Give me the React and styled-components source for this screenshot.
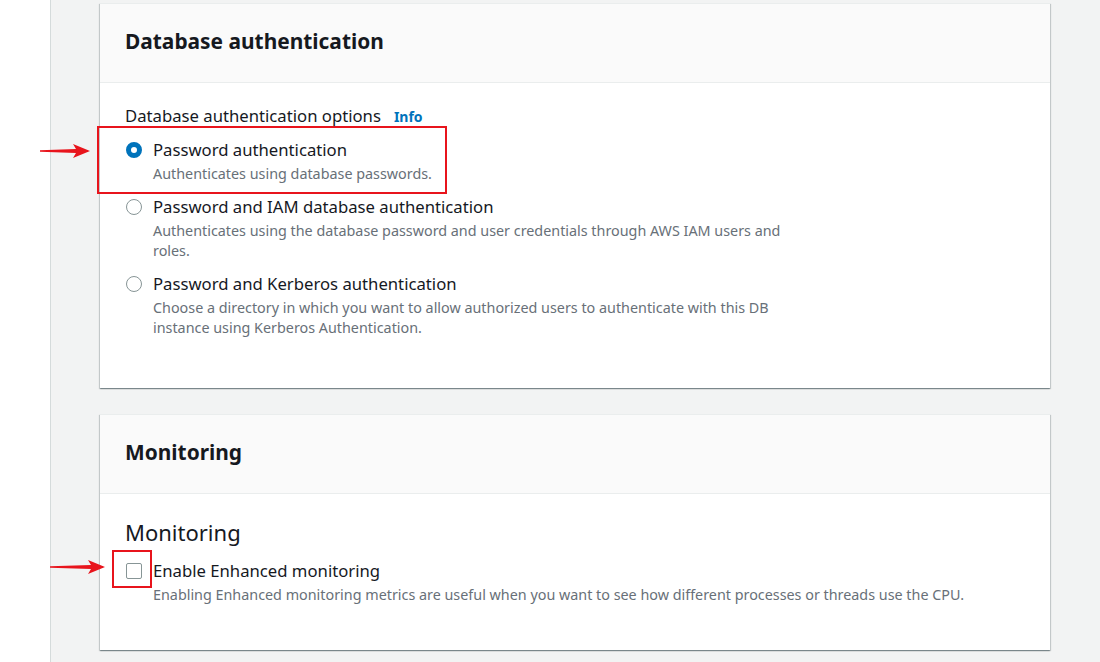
import React from "react";
import styled, { createGlobalStyle } from "styled-components";

const Global = createGlobalStyle`
  html, body { margin: 0; padding: 0; }
  body { background: #fff; font-family: "Noto Sans", "Open Sans", Arial, sans-serif; color: #16191f; }
  * { box-sizing: border-box; }
`;

const Page = styled.div`
  position: relative;
  display: flex;
  width: 1100px;
  height: 662px;
  overflow: hidden;
`;

const LeftGutter = styled.div`
  width: 51px;
  flex: none;
  background: #fff;
  border-right: 1px solid #d5dbdb;
`;

const Main = styled.div`
  position: relative;
  flex: 1;
  background: #f2f3f3;
  padding: 3px 50px 0 49px;
  display: flex;
  flex-direction: column;
  gap: 26px;
`;

const Card = styled.section`
  background: #fff;
  box-shadow: 0 1px 1px 0 rgba(0, 28, 36, 0.3), 1px 1px 1px 0 rgba(0, 28, 36, 0.15),
    -1px 1px 1px 0 rgba(0, 28, 36, 0.15);
  border-top: 1px solid #eaeded;
`;

const CardHeader = styled.header`
  background: #fafafa;
  border-bottom: 1px solid #eaeded;
  height: 79px;
  padding: 0 25px 5px;
  display: flex;
  align-items: center;
`;

const CardTitle = styled.h2`
  margin: 0;
  font-size: 20.9px;
  font-weight: 700;
  line-height: 26px;
  color: #16191f;
`;

const CardBody = styled.div`
  padding: ${(p) => p.pt}px 25px ${(p) => p.pb}px;
`;

const FieldLabel = styled.div`
  font-size: 16.7px;
  line-height: 24px;
  display: flex;
  align-items: baseline;
  gap: 13px;
`;

const Info = styled.span`
  color: #0073bb;
  font-weight: 700;
  font-size: 14px;
`;

const Options = styled.div`
  display: flex;
  flex-direction: column;
  gap: 11px;
  margin-top: 9px;
`;

const Option = styled.div`
  display: grid;
  grid-template-columns: 16px 1fr;
  column-gap: 11px;
  padding-left: 1px;
`;

const Radio = styled.span`
  width: 16px;
  height: 16px;
  margin-top: 4px;
  border-radius: 50%;
  border: ${(p) => (p.checked ? "5px solid #0073bb" : "1.5px solid #879596")};
  background: #fff;
`;

const Checkbox = styled.span`
  width: 16px;
  height: 16px;
  margin-top: 4px;
  border: 1.5px solid #879596;
  border-radius: 2px;
  background: #fff;
`;

const OptionText = styled.div`
  display: flex;
  flex-direction: column;
`;

const OptionLabel = styled.span`
  font-size: 16.7px;
  line-height: 24px;
  color: #16191f;
`;

const OptionDesc = styled.span`
  margin-top: 2px;
  font-size: 14.35px;
  line-height: 20px;
  color: #687078;
  max-width: ${(p) => (p.wide ? "none" : "640px")};
`;

const SubHeading = styled.h3`
  margin: 0 0 13px;
  font-size: 22px;
  font-weight: 400;
  line-height: 28px;
  color: #16191f;
`;

const Highlight = styled.div`
  position: absolute;
  border: 2px solid #e8141c;
  left: ${(p) => p.l}px;
  top: ${(p) => p.t}px;
  width: ${(p) => p.w}px;
  height: ${(p) => p.h}px;
  pointer-events: none;
`;

const Arrow = styled.svg`
  position: absolute;
  left: ${(p) => p.l}px;
  top: ${(p) => p.t}px;
  overflow: visible;
`;

function RedArrow({ l, t, w }) {
  return (
    <Arrow l={l} t={t} width={w} height="14" viewBox={`0 0 ${w} 14`}>
      <polygon
        points={`0,6.2 ${w - 14},5 ${w - 17},0 ${w},7 ${w - 17},14 ${w - 14},9 0,7.8`}
        fill="#e8141c"
      />
    </Arrow>
  );
}

export default function App() {
  return (
    <>
      <Global />
      <Page>
        <LeftGutter />
        <Main>
          <Card>
            <CardHeader>
              <CardTitle>Database authentication</CardTitle>
            </CardHeader>
            <CardBody pt={21} pb={50}>
              <FieldLabel>
                Database authentication options <Info>Info</Info>
              </FieldLabel>
              <Options>
                <Option>
                  <Radio checked />
                  <OptionText>
                    <OptionLabel>Password authentication</OptionLabel>
                    <OptionDesc>Authenticates using database passwords.</OptionDesc>
                  </OptionText>
                </Option>
                <Option>
                  <Radio />
                  <OptionText>
                    <OptionLabel>Password and IAM database authentication</OptionLabel>
                    <OptionDesc>
                      Authenticates using the database password and user credentials through AWS IAM users and
                      roles.
                    </OptionDesc>
                  </OptionText>
                </Option>
                <Option>
                  <Radio />
                  <OptionText>
                    <OptionLabel>Password and Kerberos authentication</OptionLabel>
                    <OptionDesc>
                      Choose a directory in which you want to allow authorized users to authenticate with this DB
                      instance using Kerberos Authentication.
                    </OptionDesc>
                  </OptionText>
                </Option>
              </Options>
            </CardBody>
          </Card>
          <Card>
            <CardHeader>
              <CardTitle>Monitoring</CardTitle>
            </CardHeader>
            <CardBody pt={24} pb={45}>
              <SubHeading>Monitoring</SubHeading>
              <Option>
                <Checkbox />
                <OptionText>
                  <OptionLabel>Enable Enhanced monitoring</OptionLabel>
                  <OptionDesc wide>
                    Enabling Enhanced monitoring metrics are useful when you want to see how different processes or
                    threads use the CPU.
                  </OptionDesc>
                </OptionText>
              </Option>
            </CardBody>
          </Card>
          <Highlight l={46} t={126} w={350} h={68} />
          <Highlight l={61} t={550} w={40} h={38} />
        </Main>
        <RedArrow l={40} t={144} w={50} />
        <RedArrow l={50} t={560} w={55} />
      </Page>
    </>
  );
}
